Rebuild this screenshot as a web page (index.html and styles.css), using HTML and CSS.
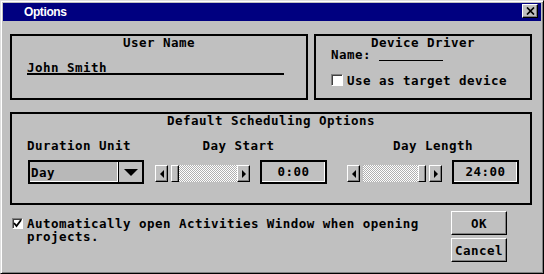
FILE: index.html
```html
<!DOCTYPE html>
<html lang="en">
<head>
<meta charset="utf-8">
<title>Options</title>
<link rel="stylesheet" href="styles.css">
</head>
<body>
<div class="window">
  <div class="titlebar">
    <span class="title">Options</span>
    <button class="close" type="button" aria-label="Close">
      <svg width="9" height="8" viewBox="0 0 9 8"><path d="M1 0.5 L8 7.5 M8 0.5 L1 7.5" stroke="#000" stroke-width="1.7" fill="none"/></svg>
    </button>
  </div>
  <div class="content">
    <div class="top-row">
      <div class="group user">
        <div class="group-title">User Name</div>
        <div class="name-field">John Smith</div>
      </div>
      <div class="group device">
        <div class="group-title">Device Driver</div>
        <div class="device-name">Name: <span class="blank"></span></div>
        <div class="check-row">
          <span class="checkbox"></span>
          <span class="check-label">Use as target device</span>
        </div>
      </div>
    </div>
    <div class="group sched">
      <div class="group-title">Default Scheduling Options</div>
      <div class="sched-grid">
        <div class="col col-unit">
          <div class="label">Duration Unit</div>
          <div class="combo">
            <div class="combo-field">Day</div>
            <div class="combo-btn"><span class="down-tri"></span></div>
          </div>
        </div>
        <div class="col col-day">
          <div class="label">Day Start</div>
          <div class="ctrl-row">
            <div class="slider">
              <span class="sbtn"><span class="tri-left"></span></span>
              <span class="track track-start"><span class="thumb"></span><span class="dots"></span></span>
              <span class="sbtn"><span class="tri-right"></span></span>
            </div>
            <div class="textbox">0:00</div>
          </div>
        </div>
        <div class="col col-len">
          <div class="label">Day Length</div>
          <div class="ctrl-row">
            <div class="slider">
              <span class="sbtn"><span class="tri-left"></span></span>
              <span class="track track-end"><span class="dots"></span><span class="thumb"></span></span>
              <span class="sbtn"><span class="tri-right"></span></span>
            </div>
            <div class="textbox">24:00</div>
          </div>
        </div>
      </div>
    </div>
    <div class="bottom">
      <div class="auto-open">
        <span class="checkbox small">
          <svg width="9" height="9" viewBox="0 0 9 9"><path d="M1 4 L3.5 7 L8 1" stroke="#000" stroke-width="1.8" fill="none"/></svg>
        </span>
        <span class="auto-text">Automatically open Activities Window when opening projects.</span>
      </div>
      <div class="buttons">
        <button class="btn" type="button">OK</button>
        <button class="btn" type="button">Cancel</button>
      </div>
    </div>
  </div>
</div>
</body>
</html>
```
FILE: styles.css
```css
* { box-sizing: border-box; }
html, body { margin: 0; padding: 0; }
body {
  width: 544px;
  height: 274px;
  overflow: hidden;
  background: #c0c0c0;
  color: #000;
  font-family: "DejaVu Sans Mono", monospace;
  font-weight: bold;
  font-size: 12.5px;
  letter-spacing: 0.47px;
}
.window {
  width: 544px;
  height: 274px;
  background: #c0c0c0;
  border: 1px solid;
  border-color: #dfdfdf #000 #000 #dfdfdf;
  box-shadow: inset 1px 1px #fff, inset -1px -1px #808080;
  padding: 2px;
  display: flex;
  flex-direction: column;
}
.titlebar {
  height: 18px;
  background: #000080;
  color: #fff;
  display: flex;
  align-items: flex-start;
  padding: 0 3px 0 21px;
}
.title {
  flex: 1;
  font-family: "Liberation Sans", Arial, sans-serif;
  font-weight: bold;
  font-size: 12px;
  letter-spacing: -0.4px;
  line-height: 18px;
}
.close {
  margin-top: 1px;
  width: 16px;
  height: 14px;
  padding: 0;
  background: #c0c0c0;
  border: 1px solid;
  border-color: #fff #000 #000 #fff;
  box-shadow: inset -1px -1px #808080;
  display: flex;
  align-items: center;
  justify-content: center;
}
.close svg { display: block; }
.content {
  flex: 1;
  padding: 13px 9px 0 7px;
  display: flex;
  flex-direction: column;
}
.top-row {
  display: flex;
  gap: 6px;
  height: 66px;
}
.group {
  border: 2px solid #000;
  padding: 1px 15px 0;
}
.user { width: 298px; }
.device { flex: 1; }
.group-title {
  text-align: center;
  line-height: 12px;
  height: 12px;
  white-space: nowrap;
}
.name-field {
  margin-top: 13px;
  width: 257px;
  height: 13px;
  line-height: 11px;
  border-bottom: 2px solid #000;
}
.device-name {
  line-height: 12px;
  height: 12px;
}
.blank {
  display: inline-block;
  width: 64px;
  height: 10px;
  border-bottom: 1px solid #000;
  vertical-align: -2px;
}
.check-row {
  margin-top: 13px;
  display: flex;
  align-items: flex-start;
  gap: 4px;
}
.checkbox {
  width: 12px;
  height: 12px;
  background: #fff;
  border: 1px solid;
  border-color: #808080 #fff #fff #808080;
  box-shadow: inset 1px 1px #404040;
  display: flex;
  align-items: center;
  justify-content: center;
  flex: none;
}
.checkbox.small { width: 11px; height: 11px; margin-top: 1px; }
.checkbox svg { display: block; }
.check-label {
  line-height: 12px;
  padding-top: 1px;
  white-space: nowrap;
}
.sched {
  margin-top: 12px;
  height: 93px;
  padding: 1px 0 0;
}
.sched-grid {
  display: flex;
  margin-top: 13px;
  padding-left: 15px;
}
.label {
  line-height: 12px;
  height: 12px;
  white-space: nowrap;
}
.col-unit { width: 117px; }
.col-day { width: 172px; margin-left: 11px; }
.col-len { width: 172px; margin-left: 20px; }
.col-day .label, .col-len .label { text-align: center; }
.col-day .label { padding-right: 5px; }
.combo {
  margin: 8px 0 0 1px;
  width: 116px;
  height: 24px;
  border: 2px solid #000;
  display: flex;
}
.combo-field {
  width: 89px;
  background: #b8b8b8;
  border-right: 1px solid #000;
  box-shadow: inset -1px -1px #fff;
  padding: 5px 0 0 1px;
  line-height: 12px;
}
.combo-btn {
  flex: 1;
  display: flex;
  align-items: center;
  justify-content: center;
}
.down-tri {
  width: 0;
  height: 0;
  border-left: 7px solid transparent;
  border-right: 7px solid transparent;
  border-top: 7px solid #000;
}
.ctrl-row {
  margin-top: 8px;
  display: flex;
  align-items: flex-start;
  gap: 10px;
}
.slider {
  margin-top: 5px;
  width: 95px;
  height: 17px;
  display: flex;
}
.sbtn {
  width: 13px;
  height: 17px;
  background: #c0c0c0;
  border: 1px solid;
  border-color: #fff #000 #000 #fff;
  box-shadow: inset -1px -1px #808080;
  display: flex;
  align-items: center;
  justify-content: center;
  flex: none;
}
.tri-left {
  width: 0; height: 0;
  border-top: 4px solid transparent;
  border-bottom: 4px solid transparent;
  border-right: 4px solid #000;
}
.tri-right {
  width: 0; height: 0;
  border-top: 4px solid transparent;
  border-bottom: 4px solid transparent;
  border-left: 4px solid #000;
}
.track {
  flex: 1;
  display: flex;
}
.track-start { padding-left: 3px; }
.track-end { padding: 0 3px; }
.dots {
  flex: 1;
  background: repeating-conic-gradient(#fff 0 25%, #b0b0b0 0 50%) 0 0 / 2px 2px;
}
.thumb {
  width: 8px;
  background: #c0c0c0;
  border: 1px solid;
  border-color: #fff #000 #000 #fff;
  box-shadow: inset -1px 0 #808080;
  flex: none;
}
.textbox {
  width: 67px;
  height: 24px;
  border: 2px solid #000;
  box-shadow: inset -1px -1px #fff;
  display: flex;
  align-items: center;
  justify-content: center;
  line-height: 12px;
}
.bottom {
  margin-top: 6px;
  padding-left: 2px;
  display: flex;
}
.auto-open {
  flex: 1;
  display: flex;
  align-items: flex-start;
  gap: 4px;
  padding: 6px 8px 0 0;
}
.auto-text { line-height: 13px; }
.buttons {
  display: flex;
  flex-direction: column;
  gap: 3px;
  margin-right: 25px;
}
.btn {
  width: 56px;
  height: 24px;
  padding: 0;
  font: inherit;
  letter-spacing: inherit;
  color: #000;
  background: #c0c0c0;
  border: 1px solid;
  border-color: #fff #000 #000 #fff;
  box-shadow: inset -1px -1px #808080;
}
```
